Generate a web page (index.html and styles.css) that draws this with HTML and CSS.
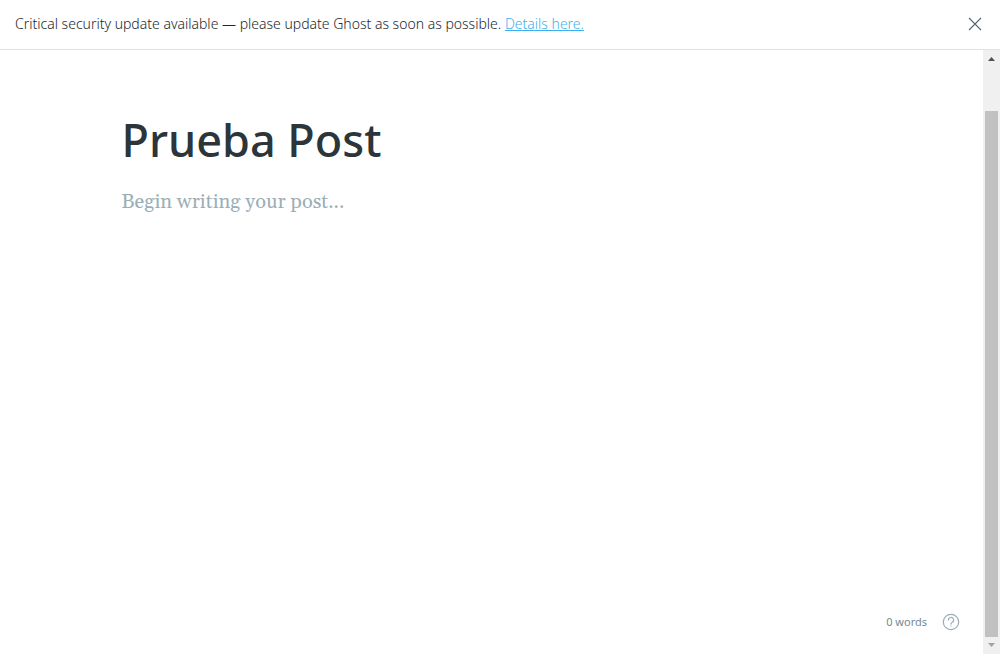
FILE: index.html
```
<!DOCTYPE html>
<html lang="en">
<head>
<meta charset="utf-8">
<title>Prueba Post</title>
<link rel="stylesheet" href="styles.css">
</head>
<body>
<div class="app">
  <header class="alert">
    <p class="alert-text">Critical security update available — please update Ghost as soon as possible. <a class="alert-link" href="#">Details here.</a></p>
    <button class="alert-close" type="button" aria-label="Close">
      <svg width="14" height="14" viewBox="0 0 14 14"><path d="M1 1l12 12M13 1L1 13" fill="none" stroke="currentColor" stroke-width="1.1"/></svg>
    </button>
  </header>
  <div class="workspace">
    <main class="editor">
      <div class="post">
        <input class="post-title" type="text" aria-label="Post title" value="Prueba Post" spellcheck="false">
        <textarea class="post-body" aria-label="Post content" placeholder="Begin writing your post..."></textarea>
      </div>
      <footer class="status">
        <span class="word-count">0 words</span>
        <button class="help" type="button" aria-label="Help">
          <svg width="18" height="18" viewBox="0 0 18 18" fill="none" stroke="currentColor" stroke-width="1.2"><circle cx="9" cy="9" r="7.7"/><path d="M6.4 7.1a2.6 2.6 0 1 1 3.9 2.2c-.9.5-1.3.8-1.3 1.9" stroke-linecap="round"/><circle cx="9" cy="13.1" r=".7" fill="currentColor" stroke="none"/></svg>
        </button>
      </footer>
    </main>
    <div class="scrollbar">
      <button class="scroll-step scroll-up" type="button" aria-label="Scroll up"><svg width="7" height="4" viewBox="0 0 7 4"><path d="M3.5 0L7 4H0z" fill="currentColor"/></svg></button>
      <div class="scroll-track"><div class="scroll-thumb"></div></div>
      <button class="scroll-step scroll-down" type="button" aria-label="Scroll down"><svg width="7" height="4" viewBox="0 0 7 4"><path d="M3.5 4L7 0H0z" fill="currentColor"/></svg></button>
    </div>
  </div>
</div>
</body>
</html>
```
FILE: styles.css
```
* { box-sizing: border-box; }
body {
  margin: 0;
  background: #fff;
  color: #343f44;
  font-family: "Noto Sans", "Open Sans", sans-serif;
}
button {
  display: flex;
  align-items: center;
  justify-content: center;
  padding: 0;
  border: 0;
  background: none;
  color: inherit;
}
.app {
  display: flex;
  flex-direction: column;
  height: 100vh;
}
.alert {
  display: flex;
  align-items: center;
  justify-content: space-between;
  padding: 14px 18px 15px 15px;
  border-bottom: 1px solid #dfe1e3;
}
.alert-text {
  margin: 0;
  color: #20282c;
  font-size: 14px;
  font-weight: 300;
  line-height: 20px;
}
.alert-link { color: #3eb0ef; }
.alert-close { color: #54666d; }
.workspace {
  display: flex;
  flex: 1;
  min-height: 0;
}
.editor {
  display: flex;
  flex: 1;
  flex-direction: column;
  min-width: 0;
}
.post {
  display: flex;
  flex: 1;
  flex-direction: column;
  width: 100%;
  max-width: 820px;
  margin: 0 auto;
  padding: 60px 40px 0;
}
.post-title,
.post-body {
  width: 100%;
  padding: 0;
  border: 0;
  outline: 0;
  background: none;
}
.post-title {
  height: 60px;
  color: #2b353a;
  font: 500 45px/60px "Noto Sans", "Open Sans", sans-serif;
}
.post-body {
  flex: 1;
  margin-top: 16px;
  resize: none;
  font: 20px/32px Gelasio, Georgia, "Liberation Serif", serif;
}
.post-body::placeholder {
  color: #9baeb8;
  opacity: 1;
}
.status {
  display: flex;
  align-items: center;
  justify-content: flex-end;
  gap: 15px;
  padding: 0 23px 23px;
  color: #738a94;
}
.word-count {
  font-size: 11px;
  line-height: 16px;
}
.help { color: #9baeb8; }
.scrollbar {
  display: flex;
  flex-direction: column;
  width: 17px;
  background: #f0f0f0;
}
.scroll-step { height: 17px; }
.scroll-up { color: #505050; }
.scroll-down {
  padding-bottom: 2px;
  color: #a3a3a3;
}
.scroll-track {
  display: flex;
  flex: 1;
  flex-direction: column;
  padding: 0 2px;
}
.scroll-thumb {
  height: 100%;
  margin-top: 44px;
  background: #c1c1c1;
}
```
